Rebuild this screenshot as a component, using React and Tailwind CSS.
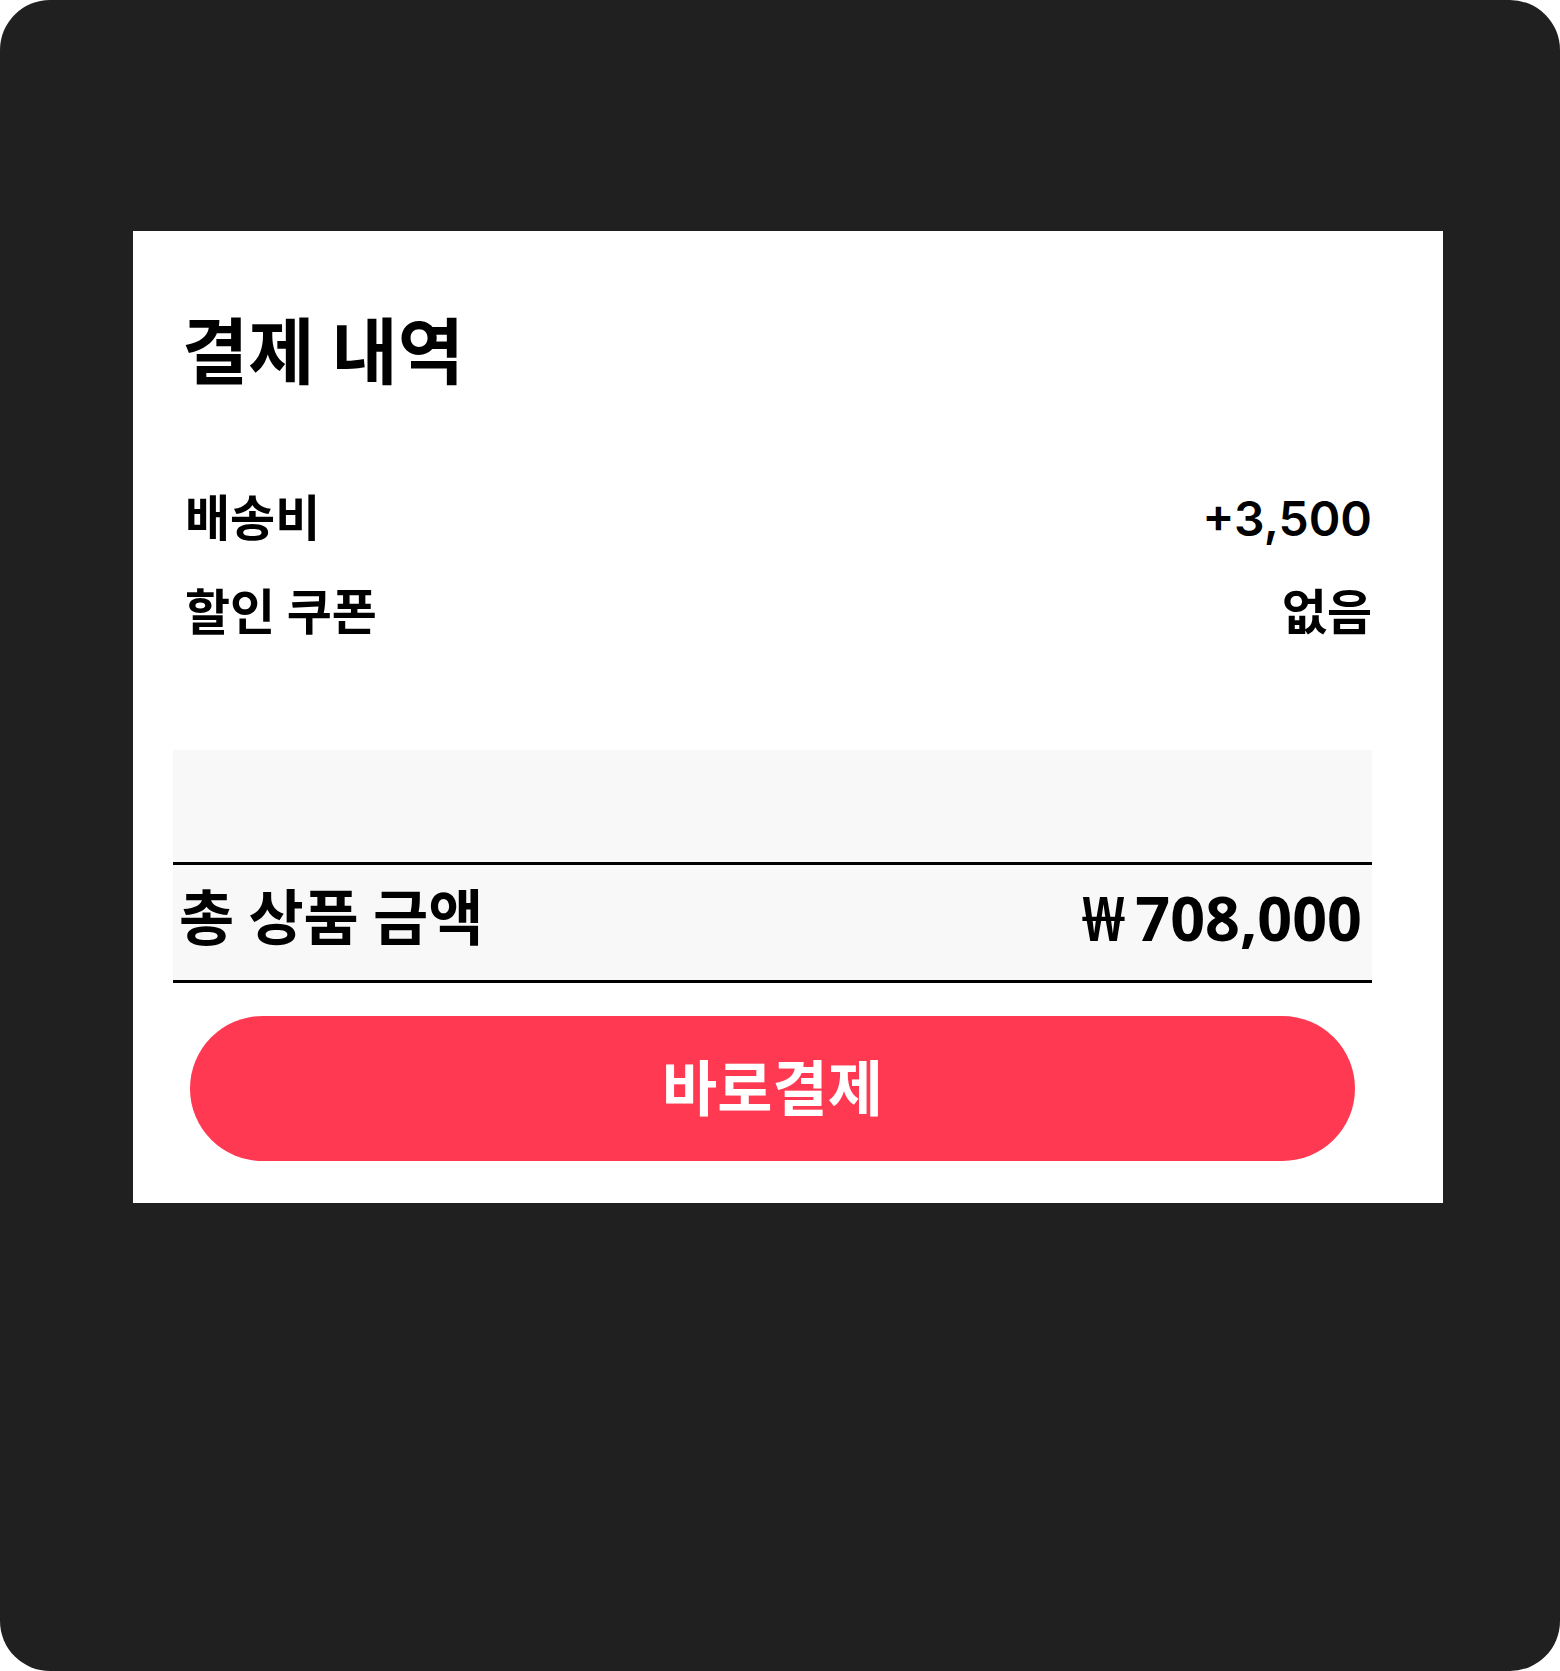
export default function App() {
  const ko = { fontFamily: 'Inter, "Noto Sans CJK KR", sans-serif' };
  const won = { fontFamily: '"Noto Sans", "Noto Sans CJK KR", sans-serif' };
  return (
    <div className="w-[1560px] h-[1671px] bg-white" style={ko}>
      <div className="w-[1560px] h-[1671px] bg-[#202020] rounded-[50px] pt-[231px] pl-[133px]">
        <div className="w-[1310px] h-[972px] bg-white pl-[40px] pr-[71px] flex flex-col">
          <h1 className="pl-[9px] pt-[71px] text-[72px] leading-[100px] font-bold text-black">결제 내역</h1>
          <div className="mt-[89px] flex flex-col gap-[38px] pl-[12px] text-[49px] font-bold text-black leading-[56px]">
            <div className="flex justify-between"><span>배송비</span><span className="font-semibold text-[48px]">+3,500</span></div>
            <div className="flex justify-between"><span>할인 쿠폰</span><span>없음</span></div>
          </div>
          <div className="mt-[109px] bg-[#f8f8f8]">
            <div className="h-[115px] border-b-[3px] border-black"></div>
            <div className="h-[118px] border-b-[3px] border-black flex items-center justify-between pl-[6px] pr-[10px] pb-[10px] text-[60px] font-bold text-black">
              <span>총 상품 금액</span>
              <span style={won} className="text-[61px] flex items-center">
                <span className="font-semibold mr-[10px]">₩</span>708,000
              </span>
            </div>
          </div>
          <button className="mt-[33px] mx-[17px] h-[145px] rounded-full bg-[#ff3951] text-white text-[60px] font-bold">바로결제</button>
        </div>
      </div>
    </div>
  );
}
